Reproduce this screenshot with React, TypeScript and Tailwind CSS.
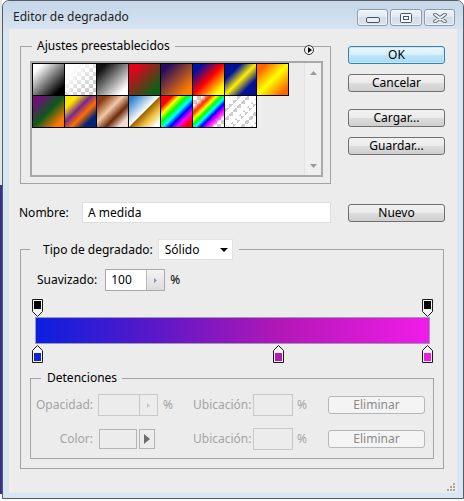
import React from 'react';

const checker =
  'conic-gradient(#cccccc_25%,#ffffff_0_50%,#cccccc_0_75%,#ffffff_0)';

// preset swatches, full class strings so tailwind picks them up
const presets = [
  'bg-[linear-gradient(135deg,#ffffff_15%,#000000_85%)]',
  'bg-[linear-gradient(135deg,#ffffff_20%,rgba(255,255,255,0)_80%),conic-gradient(#cccccc_25%,#ffffff_0_50%,#cccccc_0_75%,#ffffff_0)] bg-[length:100%_100%,8px_8px]',
  'bg-[linear-gradient(135deg,#111111_15%,#ffffff_85%)]',
  'bg-[linear-gradient(135deg,#e6001c_15%,#0b6116_85%)]',
  'bg-[linear-gradient(135deg,#2a0c5e_15%,#ff7e00_85%)]',
  'bg-[linear-gradient(135deg,#0010a8_15%,#ff0000_50%,#ffff00_85%)]',
  'bg-[linear-gradient(135deg,#00129a_25%,#ffee00_50%,#00129a_75%)]',
  'bg-[linear-gradient(135deg,#ff6600_15%,#ffff00_50%,#ff6600_88%)]',
  'bg-[linear-gradient(135deg,#6c1276_15%,#0c5a1c_50%,#ff7800_85%)]',
  'bg-[linear-gradient(135deg,#ffe600_20%,#7a2a8e_42%,#ff6e00_60%,#00247a_80%)]',
  'bg-[linear-gradient(135deg,#8c3c12_15%,#f2c8a6_42%,#6c2a0a_64%,#f2ddd0_85%)]',
  'bg-[linear-gradient(135deg,#2a7fd0_8%,#ffffff_49%,#9a6200_51%,#f0c040_70%,#ffffff_92%)]',
  'bg-[linear-gradient(135deg,#ff0000_18%,#ffff00_30%,#00ff00_42%,#00ffff_53%,#0000ff_64%,#ff00ff_76%,#ff0000_88%)]',
  'bg-[linear-gradient(135deg,rgba(255,0,0,0)_15%,#ff3000_28%,#ffff00_38%,#00ff00_46%,#00ffff_54%,#0000ff_62%,#ff00ff_72%,rgba(255,0,255,0)_85%),conic-gradient(#cccccc_25%,#ffffff_0_50%,#cccccc_0_75%,#ffffff_0)] bg-[length:100%_100%,8px_8px]',
  'bg-[repeating-linear-gradient(135deg,rgba(255,255,255,0)_0_4px,#ffffff_4px_8px),conic-gradient(#cccccc_25%,#ffffff_0_50%,#cccccc_0_75%,#ffffff_0)] bg-[length:100%_100%,8px_8px]',
];

const opacityStops = [0, 100];
const colorStops = [
  { pos: 0, color: '#1323d9' },
  { pos: 61.8, color: '#b31ab6' },
  { pos: 100, color: '#ee1be6' },
];

function Btn({
  children,
  primary,
  disabled,
  className = '',
}: {
  children: React.ReactNode;
  primary?: boolean;
  disabled?: boolean;
  className?: string;
}) {
  let look =
    'border-[#707070] bg-[linear-gradient(#f2f2f2,#ebebeb_50%,#dddddd_50%,#cfcfcf)] text-black';
  if (primary)
    look =
      'border-[#3c7fb1] bg-[linear-gradient(#eaf6fd,#d9f0fc_50%,#bee6fd_50%,#a7d9f5)] text-black shadow-[inset_0_0_0_1px_#c6ebfc]';
  if (disabled)
    look = 'border-[#b5b8ba] bg-[#f4f4f4] text-[#8a8a8a]';
  return (
    <button
      className={`w-[97px] h-[18px] rounded-[3px] border flex items-center justify-center leading-[14px] ${look} ${className}`}
    >
      {children}
    </button>
  );
}

function TitleButton({ w, children }: { w: string; children: React.ReactNode }) {
  return (
    <div
      className={`${w} h-[17px] rounded-[3px] border border-[#8d9aab] bg-[linear-gradient(#eef3f9,#dfe8f2_50%,#d3deeb_50%,#dae4ef)] shadow-[inset_0_0_0_1px_rgba(255,255,255,0.6)] flex items-center justify-center`}
    >
      {children}
    </div>
  );
}

function TopStop() {
  return (
    <svg width="11" height="18" viewBox="0 0 11 18">
      <path d="M0.5 0.5H10.5V12.5L5.5 17.5L0.5 12.5Z" fill="#f4f4f4" stroke="#1a1a1a" />
      <rect x="2" y="2" width="7" height="8" fill="#000" />
    </svg>
  );
}

function BottomStop({ color }: { color: string }) {
  return (
    <svg width="11" height="18" viewBox="0 0 11 18">
      <path d="M5.5 0.5L10.5 5.5V17.5H0.5V5.5Z" fill="#f4f4f4" stroke="#1a1a1a" />
      <rect x="2" y="8" width="7" height="8" fill={color} />
    </svg>
  );
}

function SpinInput({ value, disabled }: { value?: string; disabled?: boolean }) {
  return (
    <div
      className={`flex w-[60px] h-[22px] border ${disabled ? 'border-[#c8c8c8]' : 'border-[#a9a9a9]'}`}
    >
      <div
        className={`w-[40px] h-full pl-[5px] flex items-center ${disabled ? 'bg-[#ececec]' : 'bg-white'}`}
      >
        {value}
      </div>
      <div
        className={`flex-1 border-l flex items-center justify-center ${
          disabled
            ? 'border-[#c8c8c8] bg-[#ececec]'
            : 'border-[#b8b8b8] bg-[linear-gradient(#f4f4f4,#dcdcdc)]'
        }`}
      >
        <svg width="3" height="5" viewBox="0 0 3 5">
          <path d="M0 0L3 2.5L0 5Z" fill={disabled ? '#c4c4c4' : '#8a94b0'} />
        </svg>
      </div>
    </div>
  );
}

function Field({ w }: { w: string }) {
  return <div className={`${w} h-[22px] border border-[#c8c8c8] bg-[#ececec]`} />;
}

export default function App() {
  return (
    <div className="w-[464px] h-[501px] bg-white flex overflow-hidden font-['Noto_Sans',sans-serif] text-[12px] leading-[16px] text-black">
      {/* what lies behind the dialog */}
      <div className="w-[2px] h-[494px] flex flex-col">
        <div className="h-[185px] bg-[#e4e4e4]" />
        <div className="flex-1 bg-[#3c2f8e]" />
      </div>

      <div className="w-[462px] h-[499px] border border-[#555b63] rounded-t-[7px] bg-[#d8e5f3] flex flex-col">
        {/* title bar */}
        <div className="h-[28px] flex items-start bg-[linear-gradient(#c6d6e8,#d6e3f1)] rounded-t-[6px] pl-[10px] pr-[8px]">
          <span className="mt-[8px] text-[#1e1e1e]">Editor de degradado</span>
          <div className="ml-auto mt-[8px] flex gap-[2px]">
            <TitleButton w="w-[31px]">
              <svg width="14" height="6" viewBox="0 0 14 6" className="mt-[5px]">
                <rect x="0.5" y="0.5" width="13" height="5" rx="1.5" fill="#e9eef4" stroke="#4a5564" />
              </svg>
            </TitleButton>
            <TitleButton w="w-[32px]">
              <svg width="12" height="10" viewBox="0 0 12 10">
                <rect x="0.5" y="0.5" width="11" height="9" rx="1" fill="#f3f6fa" stroke="#4a5564" />
                <rect x="3.5" y="3.5" width="5" height="3" fill="none" stroke="#4a5564" />
              </svg>
            </TitleButton>
            <TitleButton w="w-[31px]">
              <svg width="14" height="10" viewBox="0 0 14 10">
                <path d="M2 1.5L12 8.5M12 1.5L2 8.5" stroke="#56606e" strokeWidth="3.6" strokeLinecap="round" />
                <path d="M2 1.5L12 8.5M12 1.5L2 8.5" stroke="#f6f8fb" strokeWidth="1.8" strokeLinecap="round" />
              </svg>
            </TitleButton>
          </div>
        </div>

        {/* client area */}
        <div className="mx-[6px] h-[464px] bg-[#ececec] relative flex flex-col pl-[11px] pr-[12px]">
          {/* presets + main buttons */}
          <div className="flex pt-[9px]">
            <div className="relative w-[311px] h-[146px]">
              <fieldset className="w-full h-full border border-[#a3a3a3]">
                <legend className="ml-[11px] px-[5px] leading-[16px]">Ajustes preestablecidos</legend>
                <div className="mt-[7px] ml-[9px] w-[293px] h-[116px] border-2 border-[#a8a8a8] flex">
                  <div className="grid grid-cols-[repeat(8,32px)] auto-rows-[32px] content-start">
                    {presets.map((p, i) => (
                      <div key={i} className={`w-[33px] h-[33px] border border-black ${p}`} />
                    ))}
                  </div>
                  <div className="ml-auto w-[17px] h-full border-l border-[#e2e2e2] bg-[#efefef] flex flex-col items-center justify-between pt-[8px] pb-[7px]">
                    <svg width="7" height="4" viewBox="0 0 7 4">
                      <path d="M0 4L3.5 0L7 4Z" fill="#9a9a9a" />
                    </svg>
                    <svg width="7" height="4" viewBox="0 0 7 4">
                      <path d="M0 0L3.5 4L7 0Z" fill="#9a9a9a" />
                    </svg>
                  </div>
                </div>
              </fieldset>
              {/* flyout menu button on the group border */}
              <div className="absolute top-[7px] left-[284px] w-[10px] h-[10px] rounded-full border border-[#333] bg-[#f4f4f4] flex items-center justify-center">
                <svg width="4" height="6" viewBox="0 0 4 6" className="ml-[1px]">
                  <path d="M0 0L4 3L0 6Z" fill="#000" />
                </svg>
              </div>
            </div>

            <div className="ml-auto mt-[8px] flex flex-col">
              <Btn primary>OK</Btn>
              <Btn className="mt-[10px]">Cancelar</Btn>
              <Btn className="mt-[17px]">Cargar...</Btn>
              <Btn className="mt-[10px]">Guardar...</Btn>
            </div>
          </div>

          {/* name row */}
          <div className="flex items-center mt-[18px] -ml-px">
            <span className="w-[63px]">Nombre:</span>
            <div className="w-[249px] h-[21px] bg-white border border-[#dedede] pl-[5px] flex items-center">
              A medida
            </div>
            <Btn className="ml-auto">Nuevo</Btn>
          </div>

          {/* gradient type group */}
          <fieldset className="mt-[16px] w-[424px] border border-[#a3a3a3] pb-[9px]">
            <legend className="ml-[9px] pl-[13px] pr-[6px]">
              <div className="flex items-center">
                <span>Tipo de degradado:</span>
                <div className="ml-[5px] w-[75px] h-[21px] bg-white border border-[#e2e2e2] pl-[6px] pr-[4px] flex items-center justify-between">
                  <span>Sólido</span>
                  <svg width="8" height="4" viewBox="0 0 8 4">
                    <path d="M0 0H8L4 4Z" fill="#000" />
                  </svg>
                </div>
              </div>
            </legend>

            <div className="mt-[9px] pl-[16px] flex items-center">
              <span>Suavizado:</span>
              <div className="ml-[8px]">
                <SpinInput value="100" />
              </div>
              <span className="ml-[5px]">%</span>
            </div>

            {/* gradient bar with stops */}
            <div className="relative mt-[8px] ml-[10px] w-[402px] h-[64px]">
              {opacityStops.map((p) => (
                <div key={p} className="absolute top-0" style={{ left: 1 + (p / 100) * 390 }}>
                  <TopStop />
                </div>
              ))}
              <div className="absolute left-[4px] top-[18px] w-[395px] h-[27px] border border-[#9a9ab4] bg-[linear-gradient(to_right,#0b1fe0,#5a18c8_30%,#b317b6_62%,#f11ce9)]" />
              {colorStops.map((s) => (
                <div key={s.pos} className="absolute top-[46px]" style={{ left: 1 + (s.pos / 100) * 390 }}>
                  <BottomStop color={s.color} />
                </div>
              ))}
            </div>

            {/* stops group */}
            <fieldset className="mt-[7px] ml-[9px] w-[404px] border border-[#a3a3a3] pb-[8px]">
              <legend className="ml-[10px] pl-[6px] pr-[5px]">Detenciones</legend>
              <div className="mt-[8px] flex items-center text-[#a4a4a4]">
                <div className="w-[162px] flex items-center">
                  <span className="w-[62px] text-right">Opacidad:</span>
                  <div className="ml-[5px]">
                    <SpinInput disabled />
                  </div>
                  <span className="ml-[5px]">%</span>
                </div>
                <span className="w-[60px]">Ubicación:</span>
                <Field w="w-[40px]" />
                <span className="ml-[4px] w-[31px]">%</span>
                <Btn disabled>Eliminar</Btn>
              </div>
              <div className="mt-[12px] flex items-center text-[#a4a4a4]">
                <div className="w-[162px] flex items-center">
                  <span className="w-[62px] text-right">Color:</span>
                  <div className="ml-[6px] w-[38px] h-[20px] border border-[#b4b4b4] bg-[#ececec]" />
                  <div className="ml-[2px] w-[16px] h-[20px] border border-[#b4b4b4] bg-[#ececec] flex items-center justify-center">
                    <svg width="6" height="10" viewBox="0 0 6 10">
                      <path d="M0 0L6 5L0 10Z" fill="#6e6e6e" />
                    </svg>
                  </div>
                </div>
                <span className="w-[60px]">Ubicación:</span>
                <Field w="w-[40px]" />
                <span className="ml-[4px] w-[31px]">%</span>
                <Btn disabled>Eliminar</Btn>
              </div>
            </fieldset>
          </fieldset>

          {/* resize grip */}
          <svg width="9" height="9" viewBox="0 0 9 9" className="absolute right-[2px] bottom-[2px]">
            <rect x="7" y="1" width="2" height="2" fill="#a8a8a8" />
            <rect x="4" y="4" width="2" height="2" fill="#a8a8a8" />
            <rect x="7" y="4" width="2" height="2" fill="#a8a8a8" />
            <rect x="1" y="7" width="2" height="2" fill="#a8a8a8" />
            <rect x="4" y="7" width="2" height="2" fill="#a8a8a8" />
            <rect x="7" y="7" width="2" height="2" fill="#a8a8a8" />
          </svg>
        </div>
      </div>
    </div>
  );
}
